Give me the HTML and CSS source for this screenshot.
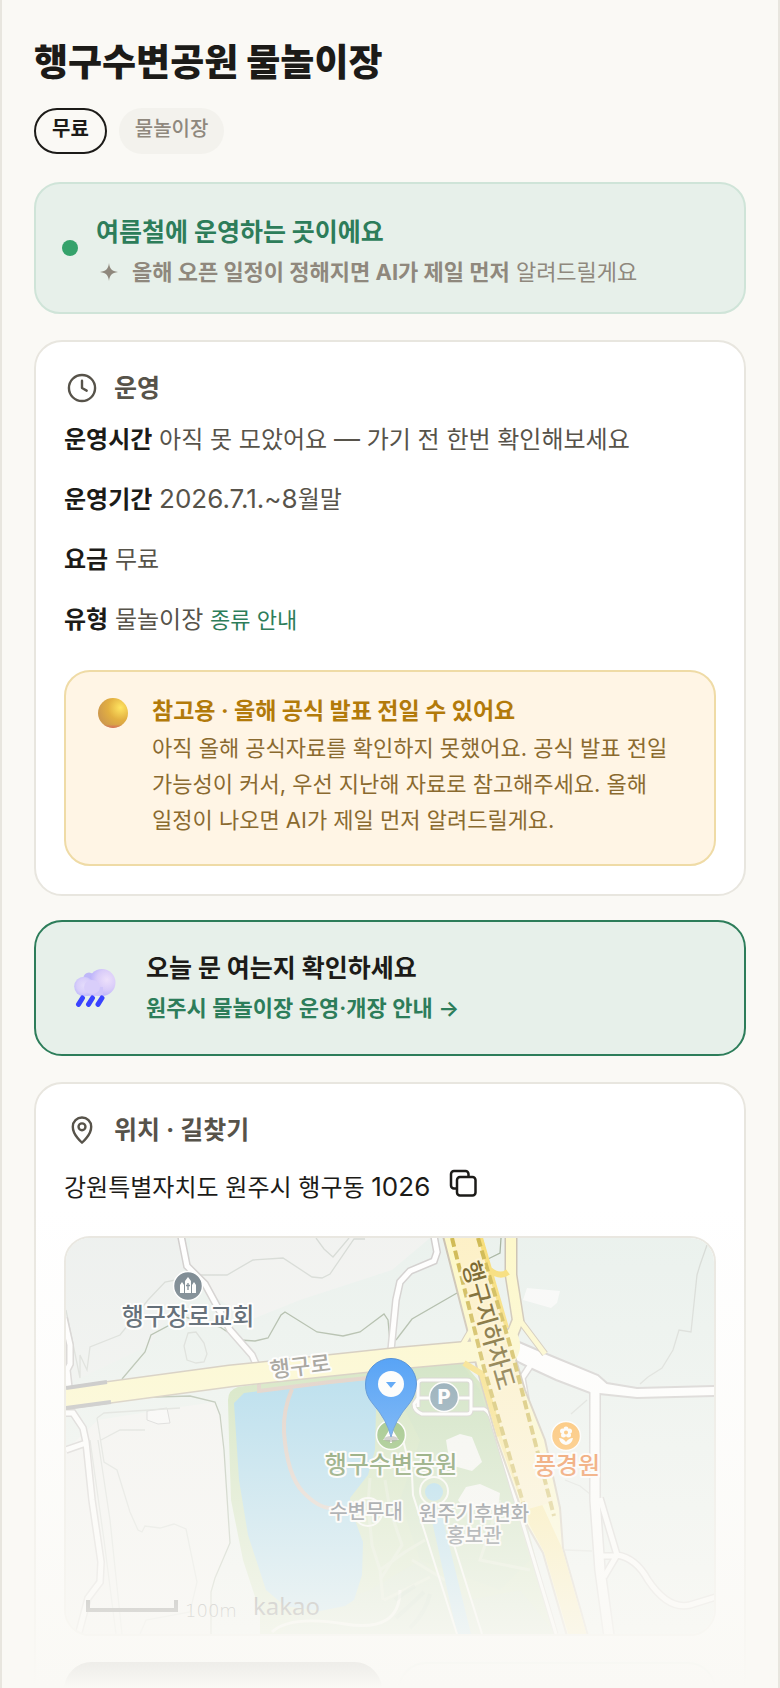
FILE: index.html
```html
<!DOCTYPE html>
<html lang="ko">
<head>
  <meta charset="UTF-8" />
  <meta name="viewport" content="width=device-width, initial-scale=1.0"/>
  <title>행구수변공원 물놀이장</title>
  <link rel="stylesheet" href="styles.css">
</head>
<body>
  <main class="page">
    <h1>행구수변공원 물놀이장</h1>
    <div class="chips">
      <span class="chip chip-outline">무료</span>
      <span class="chip">물놀이장</span>
    </div>

    <!-- Season status -->
    <section class="banner">
      <span class="dot"></span>
      <div>
        <p class="banner-title">여름철에 운영하는 곳이에요</p>
        <p class="banner-sub">
          <svg class="spark" viewBox="0 0 16 16" fill="currentColor"><path d="M8 0c.6 5 2.200 7 8 8-5.800 1-7.400 3-8 8-.6-5-2.200-7-8-8 5.800-1 7.400-3 8-8z"/></svg>
          <span><b>올해 오픈 일정이 정해지면 AI가 제일 먼저</b> 알려드릴게요</span>
        </p>
      </div>
    </section>

    <!-- Hours -->
    <section class="card">
      <h2>
        <svg class="icon" viewBox="0 0 24 24"><circle cx="12" cy="12" r="9.800"/><path d="M12 6.500V12l3.500 2"/></svg>
        운영
      </h2>
      <div class="rows">
        <p><b>운영시간</b> 아직 못 모았어요 <span class="num">—</span> 가기 전 한번 확인해보세요</p>
        <p><b>운영기간</b> <span class="num">2026.7.1.~8</span>월말</p>
        <p><b>요금</b> 무료</p>
        <p><b>유형</b> 물놀이장 <a class="kind-link" href="#">종류 안내</a></p>
      </div>

      <div class="notice">
        <svg class="ball" viewBox="0 0 30 30">
          <defs>
            <radialGradient id="ballFill" cx="0.750" cy="0.320" r="0.750">
              <stop offset="0" stop-color="#ffe561"/>
              <stop offset="0.550" stop-color="#e3b041"/>
              <stop offset="1" stop-color="#cf9a4c"/>
            </radialGradient>
            <linearGradient id="ballRim" x1="0" y1="0" x2="0" y2="1">
              <stop offset="0.880" stop-color="#d9605f" stop-opacity="0"/>
              <stop offset="1" stop-color="#d9605f" stop-opacity="0.800"/>
            </linearGradient>
          </defs>
          <circle cx="15" cy="15" r="15" fill="url(#ballFill)"/>
          <circle cx="15" cy="15" r="15" fill="url(#ballRim)"/>
        </svg>
        <div>
          <p class="notice-title">참고용 · 올해 공식 발표 전일 수 있어요</p>
          <p class="notice-text">아직 올해 공식자료를 확인하지 못했어요. 공식 발표 전일 가능성이 커서, 우선 지난해 자료로 참고해주세요. 올해 일정이 나오면 AI가 제일 먼저 알려드릴게요.</p>
        </div>
      </div>
    </section>

    <!-- Official notice link -->
    <a class="check" href="#">
      <svg class="cloud" viewBox="0 0 42 38">
        <defs>
          <radialGradient id="puffBig" cx="0.680" cy="0.400" r="0.620">
            <stop offset="0" stop-color="#ede0fb"/>
            <stop offset="0.600" stop-color="#d9ccf9"/>
            <stop offset="1" stop-color="#bdb4fb"/>
          </radialGradient>
          <radialGradient id="puffSmall" cx="0.500" cy="0.450" r="0.600">
            <stop offset="0" stop-color="#e4dcfb"/>
            <stop offset="0.600" stop-color="#d8cefa"/>
            <stop offset="1" stop-color="#bcb7fa"/>
          </radialGradient>
        </defs>
        <circle cx="15" cy="9" r="5.500" fill="#bfb8f8"/>
        <circle cx="28" cy="13.500" r="13.500" fill="url(#puffBig)"/>
        <rect x="9" y="18" width="20" height="9" fill="#cfc4fa"/>
        <circle cx="10" cy="17.500" r="9.800" fill="url(#puffSmall)"/>
        <ellipse cx="18" cy="18" rx="8" ry="7" fill="#d9cefa"/>
        <g stroke="#3a43ff" stroke-width="5" stroke-linecap="round">
          <path d="M8.500 29l-4 6.300M18.500 29l-4 6.300M28 29l-4 6.300"/>
        </g>
      </svg>
      <span>
        <strong>오늘 문 여는지 확인하세요</strong>
        <span class="check-link">원주시 물놀이장 운영·개장 안내 →</span>
      </span>
    </a>

    <!-- Location -->
    <section class="card">
      <h2>
        <svg class="icon" viewBox="0 0 24 24"><path d="M12 21.500s6.900-5.700 6.900-12a6.900 6.900 0 0 0-13.800 0c0 6.300 6.900 12 6.900 12z"/><circle cx="12" cy="9.600" r="2.600"/></svg>
        위치 · 길찾기
      </h2>
      <div class="address">
        <span>강원특별자치도 원주시 행구동 <span class="num">1026</span></span>
        <button class="copy" type="button" aria-label="주소 복사">
          <svg viewBox="0 0 28 28"><path d="M7 19.500H5a3 3 0 0 1-3-3V5a3 3 0 0 1 3-3h11.500a3 3 0 0 1 3 3v2"/><rect x="8" y="8" width="18.500" height="18.500" rx="3"/></svg>
        </button>
      </div>

      <div class="map">
        <svg viewBox="66 1238 648 396" preserveAspectRatio="xMidYMid slice">
          <rect x="66" y="1238" width="648" height="396" fill="#eaf1ed"/>
          <!-- plots -->
          <path d="M190 1238H430L392 1270 300 1300 250 1320 190 1280z" fill="#f1f2f0"/>
          <path d="M66 1238H180L186 1290 150 1345 66 1385z" fill="#edf0ee"/>
          <path d="M98 1420L160 1410 215 1402 222 1420 230 1540 212 1590V1634H66V1450z" fill="#f2f2f0"/>
          <path d="M527 1288L560 1291 557 1303 551 1308 523 1300z" fill="#f8f9f8"/>
          <path d="M147 1411L167 1408 170 1423 158 1424 147 1420z" fill="#f8f8f8" stroke="#ccc"/>
          <g class="contour">
            <path d="M316 1238L324 1249 333 1257 349 1238M365 1239H354L330 1274 322 1278 312 1277 283 1258 253 1260 227 1275H200L165 1282 148 1300 120 1335 90 1347 87 1370 80 1355V1378L66 1310"/>
            <path d="M188 1333L196 1332 204 1343 207 1354 204 1362 196 1363 187 1360 184 1346z"/>
            <path d="M707 1245L700 1265 697 1275 691 1332 679 1330 673 1350 662 1368 648 1377 640 1384"/>
            <path d="M97 1418L104 1413 180 1408M101 1440L120 1430H145M97 1418L104 1462 117 1470 130 1512 138 1530 142 1532 145 1526 160 1528 174 1524 186 1529 197 1582 190 1612 146 1620 140 1634"/>
            <path d="M98 1440L110 1520 122 1634M90 1440L104 1540 116 1634M587 1400L571 1414M565 1480L580 1486 590 1494M565 1550L592 1551"/>
          </g>
          <g class="contour contour-dark">
            <path d="M122 1379L145 1352 151 1335 185 1317 220 1327 240 1340 255 1341 268 1338 281 1315 285 1312 317 1332 343 1336 360 1332 384 1314 388 1320 390 1342"/>
            <path d="M396 1340L412 1319 457 1293M488 1259L500 1253 501 1238"/>
            <path d="M122 1398L190 1396 215 1402 220 1415 224 1450 230 1543 215 1578 211 1592V1634"/>
          </g>

          <!-- park and lake -->
          <path d="M228 1400q0-10 10-13L400 1365 462 1361 482 1385 515 1480 556 1634H260V1612L243 1560 231 1500 229 1440z" fill="#c9dfb2"/>
          <path d="M385 1370L462 1364 480 1390 500 1450 530 1560 500 1590 420 1560 400 1500 420 1440z" fill="#c0dab4" opacity="0.600"/>
          <path d="M300 1612L370 1590 420 1560 470 1600 520 1590 556 1634H280z" fill="#c3dac4" opacity="0.500"/>
          <path d="M234 1403L244 1393 259 1391 365 1380 374 1382 376 1410 375 1450 368 1475 350 1498 352 1512 363 1542 362 1575 354 1600 345 1606 320 1611 285 1606 266 1590 248 1535 239 1480z" fill="#9dd3ea"/>
          <g fill="none" stroke="#d8c4b8" stroke-width="4">
            <path d="M259 1382V1391L330 1382 368 1378"/>
            <path d="M292 1389Q283 1410 284 1432 287 1475 303 1492T333 1508"/>
          </g>
          <g fill="none" stroke="#d7e5c6" stroke-width="3">
            <path d="M370 1478L368 1505 372 1545 380 1570 383 1600M385 1480L390 1510 402 1545 380 1580M380 1570L405 1552 425 1540M412 1560L445 1580M500 1500L480 1560 530 1570M384 1600L430 1577"/>
          </g>
          <path d="M272 1632Q290 1615 345 1624T400 1590" fill="none" stroke="#f1f4e8" stroke-width="3"/>
          <g fill="none" stroke="#9dbfa6" stroke-width="4" opacity="0.400"><path d="M395 1600q10-8 20-14M396 1618q18-16 28-26M410 1628q16-16 20-34"/></g>
          <path d="M446 1440L460 1434 472 1437 482 1462 472 1471 450 1465z" fill="#f4f5f1"/>
          <path d="M466 1487L480 1484 500 1493 498 1510H465L458 1500z" fill="#f4f5f1"/>
          <path d="M430 1512L440 1508 471 1634H457z" fill="#9dd3ea"/>
          <g fill="none" stroke="#fafaf6" stroke-width="2">
            <path d="M403 1440L412 1475 413 1495 457 1634M454 1545L482 1634"/>
            <circle cx="434" cy="1491" r="14"/>
            <circle cx="368" cy="1512" r="14"/>
          </g>
          <circle cx="434" cy="1492" r="9" fill="#8fcfe9"/>

          <!-- parking lot lanes -->
          <g fill="none" stroke-linejoin="round">
            <path d="M418 1407V1384q0-4 4-4H467q4 0 4 4V1410q0 4-4 4H422q-8-3-8-10l4-6H471M471 1409H484q6 3 8 12L556 1634" stroke="#c9c6c2" stroke-width="5"/>
            <path d="M418 1407V1384q0-4 4-4H467q4 0 4 4V1410q0 4-4 4H422q-8-3-8-10l4-6H471M471 1409H484q6 3 8 12L556 1634" stroke="#fff" stroke-width="3"/>
          </g>

          <!-- minor roads, casing first -->
          <g class="casing">
            <path d="M181 1236L187 1266 205 1284 230 1330 252 1355 256 1364"/>
            <path d="M64 1318L70 1345V1364L67 1370 69 1388"/>
            <path d="M434 1236L437 1252 434 1261 410 1271 400 1282 396 1300 391 1350"/>
            <path d="M66 1413H73L83 1428 86 1442 92 1500 101 1562 100 1582 88 1598 78 1636M66 1450L86 1443"/>
            <path d="M603 1556H617M600 1498L617 1555 604 1577M617 1555Q636 1558 648 1580 668 1610 690 1605L716 1597M530 1366L522 1378 526 1400"/>
            <path class="casing-wide" d="M595 1390V1500L600 1570 609 1636"/>
          </g>
          <path d="M510 1338L547 1354 598 1375 607 1383 637 1388 716 1386V1396L637 1398 590 1393 556 1380 530 1368 510 1358z" fill="#fff" stroke="#cfcccb" stroke-width="2"/>
          <g class="lane">
            <path d="M181 1236L187 1266 205 1284 230 1330 252 1355 256 1364"/>
            <path d="M64 1318L70 1345V1364L67 1370 69 1388"/>
            <path d="M434 1236L437 1252 434 1261 410 1271 400 1282 396 1300 391 1350"/>
            <path d="M66 1413H73L83 1428 86 1442 92 1500 101 1562 100 1582 88 1598 78 1636M66 1450L86 1443"/>
            <path d="M603 1556H617M600 1498L617 1555 604 1577M617 1555Q636 1558 648 1580 668 1610 690 1605L716 1597M530 1366L522 1378 526 1400"/>
            <path class="lane-wide" d="M595 1388V1500L600 1570 609 1636"/>
          </g>

          <!-- main roads -->
          <g fill="none" stroke="#c9bfae">
            <path d="M60 1399L230 1376 400 1358 490 1350" stroke-width="23"/>
            <path d="M511 1236V1275L518 1320 508 1345" stroke-width="13"/>
            <path d="M518 1318L545 1354M476 1322L462 1346" stroke-width="7"/>
          </g>
          <path d="M443 1236H481L507 1330 525 1390 545 1440 560 1508 563 1548 588 1636H567L543 1553 527 1525 497 1440 478 1372z" fill="#fdf8c4" stroke="#c9bfae" stroke-width="2"/>
          <g fill="none" stroke="#fdf8c8">
            <path d="M60 1399L230 1376 400 1358 490 1350" stroke-width="20"/>
            <path d="M511 1236V1275L518 1320 508 1345" stroke-width="10"/>
            <path d="M518 1318L545 1354M476 1322L462 1346" stroke-width="5"/>
            <path d="M508 1330Q520 1346 508 1360L500 1372" stroke-width="12"/>
          </g>
          <path d="M480 1372L499 1440 529 1524 544 1552 569 1636H587L562 1548 540 1500 525 1506z" fill="#fbe793"/>
          <path d="M480 1238L506 1328M490 1270Q500 1278 508 1272M464 1363L482 1374 500 1436" fill="none" stroke="#f7dc72" stroke-width="6"/>
          <path d="M452 1238H478L512 1352 553 1502 525 1510 484 1368z" fill="#fdf0c4"/>
          <g fill="none" stroke="#cdb64a" stroke-width="4" stroke-dasharray="9 4">
            <path d="M452 1238L484 1368 524 1506M478 1238L512 1352 554 1516"/>
          </g>
          <path d="M66 1388L107 1382M66 1408L111 1402" stroke="#b5b5b5" stroke-width="4"/>

          <!-- place names -->
          <g class="label">
            <text class="place" x="188" y="1325" fill="#3d4b58" text-anchor="middle">행구장로교회</text>
            <text class="road" transform="translate(271 1378) rotate(-7)" fill="#85827a">행구로</text>
            <text class="place label-road" transform="translate(462 1264) rotate(74)" fill="#6b5716">행구지하차도</text>
            <text class="place" x="391" y="1473" fill="#3f6a1c" text-anchor="middle">행구수변공원</text>
            <text class="place" x="567" y="1474" fill="#e9640d" text-anchor="middle">풍경원</text>
            <text class="spot" x="366" y="1519" fill="#333c48" text-anchor="middle">수변무대</text>
            <text class="spot" x="474" y="1521" fill="#333c48" text-anchor="middle">원주기후변화</text>
            <text class="spot" x="474" y="1543" fill="#333c48" text-anchor="middle">홍보관</text>
          </g>

          <!-- markers -->
          <g stroke="#fff" stroke-width="1.500">
            <circle cx="188" cy="1286" r="14.500" fill="#6d7c86"/>
            <circle cx="444" cy="1397" r="14.500" fill="#6c8ea0"/>
            <circle cx="391" cy="1435" r="14.500" fill="#6ea94b"/>
            <circle cx="566" cy="1436" r="14.500" fill="#fea932"/>
          </g>
          <path d="M180 1293V1285l2-3 2 3v8zM192 1293V1285l2-3 2 3v8zM185 1293V1281l3-4 3 4V1293z" fill="#fff"/>
          <path d="M188 1283v7M186 1285.500h4" stroke="#6d7c86" stroke-width="1.300"/>
          <text class="parking" x="444" y="1404" fill="#fff" text-anchor="middle">P</text>
          <path d="M391 1429l6 10h-12zM391 1437v6" fill="#fff" stroke="#fff" stroke-width="2"/>
          <g fill="#fff">
            <circle cx="566" cy="1429" r="2.500"/><circle cx="569.500" cy="1431" r="2.500"/><circle cx="568.500" cy="1435" r="2.500"/><circle cx="563.500" cy="1435" r="2.500"/><circle cx="562.500" cy="1431" r="2.500"/>
            <path d="M559 1438q4 0 7 4 3-4 7-4-1 6-7 7-6-1-7-7z"/>
          </g>
          <circle cx="566" cy="1432.500" r="2" fill="#fea932"/>
          <ellipse cx="391" cy="1439" rx="7" ry="3" fill="#777" opacity="0.600"/>
          <path d="M391 1437Q387 1420 373 1404 365 1395 365.500 1384a25.500 25.500 0 0 1 51 0Q416 1395 409 1404 395 1420 391 1437z" fill="#0f7df6" stroke="#0a62c8" stroke-width="1"/>
          <circle cx="391" cy="1384" r="13" fill="#fff"/>
          <path d="M386 1382h10l-5 6z" fill="#0f7df6"/>

          <!-- scale and logo -->
          <path d="M88 1600V1610H176V1600" fill="none" stroke="#3a3a3a" stroke-width="4"/>
          <text class="scale" x="185" y="1617" fill="#3a3a3a">100m</text>
          <text class="logo" x="253" y="1615" fill="#3a3a3a">kakao</text>
        </svg>
      </div>

      <div class="actions">
        <button class="action action-dark" type="button" aria-label="길찾기"></button>
        <button class="action" type="button" aria-label="지도 보기"></button>
      </div>
    </section>
    <div class="fade"></div>
  </main>
</body>
</html>
```
FILE: styles.css
```css
* {
  box-sizing: border-box;
}
body {
  margin: 0;
  font-family: Inter, "Noto Sans CJK KR", sans-serif;
  font-size: 24px;
  color: #1c1b18;
  background-color: #faf9f5;
  word-break: keep-all;
}
h1, h2, p {
  margin: 0;
}
a {
  text-decoration: none;
}
button {
  font: inherit;
  cursor: pointer;
}
/* digits sit a little larger than the hangul */
.num {
  font-size: 26px;
  line-height: 1;
}
.page {
  position: relative;
  display: flex;
  flex-direction: column;
  height: 100vh;
  overflow: hidden;
  padding: 36px 32px 0;
  border: solid #e8e6df;
  border-width: 0 2px;
}
.page > * {
  flex-shrink: 0;
}
h1 {
  font-size: 37px;
  font-weight: 800;
  line-height: 54px;
}
.chips {
  display: flex;
  gap: 12px;
  margin: 18px 0 28px;
}
.chip {
  padding: 6px 16px 10px;
  border-radius: 23px;
  font-size: 20px;
  font-weight: 500;
  line-height: 30px;
  color: #8f887d;
  background-color: #f3f2ed;
}
.chip-outline {
  padding: 4px 16px 8px;
  border: 2px solid #1c1b18;
  font-weight: 700;
  color: #1c1b18;
  background-color: transparent;
}

/* season banner */
.banner {
  display: flex;
  align-items: flex-start;
  gap: 18px;
  padding: 28px 26px 20px;
  border: 2px solid #cfe4d8;
  border-radius: 26px;
  background-color: #e7f0ea;
}
.dot {
  width: 16px;
  height: 16px;
  margin-top: 28px;
  border-radius: 50%;
  background-color: #35a26b;
}
.banner-title {
  font-size: 25px;
  font-weight: 700;
  line-height: 40px;
  color: #2d7d5a;
}
.banner-sub {
  display: flex;
  align-items: center;
  gap: 14px;
  padding-left: 4px;
  font-size: 22px;
  line-height: 40px;
  color: #8f887d;
}
.spark {
  width: 18px;
  height: 18px;
}

/* cards */
.card {
  margin-top: 26px;
  padding: 28px 28px;
  border: 2px solid #e8e6df;
  border-radius: 28px;
  background-color: #fff;
}
h2 {
  display: flex;
  align-items: center;
  gap: 16px;
  font-size: 25px;
  font-weight: 700;
  line-height: 36px;
  color: #57534a;
}
.icon {
  width: 32px;
  height: 32px;
  margin-left: 2px;
  fill: none;
  stroke: currentColor;
  stroke-width: 1.8;
  stroke-linecap: round;
  stroke-linejoin: round;
}
.rows {
  display: flex;
  flex-direction: column;
  gap: 24px;
  margin-top: 16px;
  line-height: 36px;
  color: #57534a;
}
.rows b {
  color: #1c1b18;
}
.kind-link {
  font-size: 22px;
  line-height: 1;
  color: #2d7d5a;
}
.notice {
  display: flex;
  gap: 24px;
  margin-top: 32px;
  padding: 20px 32px 26px;
  border: 2px solid #efdba6;
  border-radius: 26px;
  background-color: #fff5e5;
}
.ball {
  flex-shrink: 0;
  width: 30px;
  height: 30px;
  margin-top: 6px;
}
.notice-title {
  font-size: 23px;
  font-weight: 700;
  line-height: 38px;
  color: #b27a0a;
}
.notice-text {
  font-size: 22px;
  line-height: 36px;
  color: #8a6a2f;
}
.check {
  display: flex;
  align-items: center;
  gap: 30px;
  margin-top: 24px;
  padding: 26px 38px 26px;
  border: 2px solid #2d7d5a;
  border-radius: 28px;
  color: #1c1b18;
  background-color: #e7f0ea;
}
.check strong {
  display: block;
  font-size: 25px;
  line-height: 40px;
}
.check-link {
  display: block;
  font-size: 22px;
  font-weight: 600;
  line-height: 40px;
  color: #2d7d5a;
}
.cloud {
  width: 42px;
  height: 38px;
}
.address {
  display: flex;
  gap: 16px;
  margin-top: 18px;
  line-height: 44px;
}
.copy {
  width: 34px;
  height: 34px;
  padding: 3px;
  border: none;
  color: inherit;
  background: none;
}
.copy svg {
  display: block;
  width: 28px;
  height: 28px;
  fill: none;
  stroke: currentColor;
  stroke-width: 2.5;
  stroke-linecap: round;
}

/* map */
.map {
  height: 400px;
  margin-top: 26px;
  overflow: hidden;
  border: 2px solid #e8e6df;
  border-radius: 26px;
}
.map svg {
  display: block;
  width: 100%;
  height: 100%;
}
.contour {
  fill: none;
  stroke: #d5d9d4;
  stroke-width: 1.3;
}
.contour-dark {
  stroke: #a3b19c;
}
.casing {
  fill: none;
  stroke: #cfcccb;
  stroke-width: 8;
}
.casing-wide {
  stroke-width: 12;
}
.lane {
  fill: none;
  stroke: #fff;
  stroke-width: 5;
}
.lane-wide {
  stroke-width: 9;
}
.label {
  font-weight: 500;
  paint-order: stroke;
  stroke: #fff;
  stroke-width: 4;
  stroke-linejoin: round;
}
.label-road {
  stroke: #fdf3cf;
}
.place {
  font-size: 24px;
}
.road {
  font-size: 22px;
}
.spot {
  font-size: 20px;
}
.parking {
  font-size: 20px;
  font-weight: 800;
}
.scale {
  font-family: "DejaVu Sans", sans-serif;
  font-size: 18px;
  font-weight: 200;
}
.logo {
  font-family: "Noto Sans", sans-serif;
  font-size: 24px;
}
.actions {
  display: grid;
  grid-template-columns: 1fr 1fr;
  gap: 16px;
  margin-top: 26px;
}
.action {
  height: 88px;
  border: 2px solid #cfe4d8;
  border-radius: 28px;
  background-color: #fff;
}
.action-dark {
  border-color: #1c1b18;
  background-color: #1c1b18;
}
.fade {
  position: absolute;
  right: 0;
  bottom: 0;
  left: 0;
  height: 480px;
  background: linear-gradient(rgba(250, 249, 245, 0), #faf9f5);
  pointer-events: none;
}
```
